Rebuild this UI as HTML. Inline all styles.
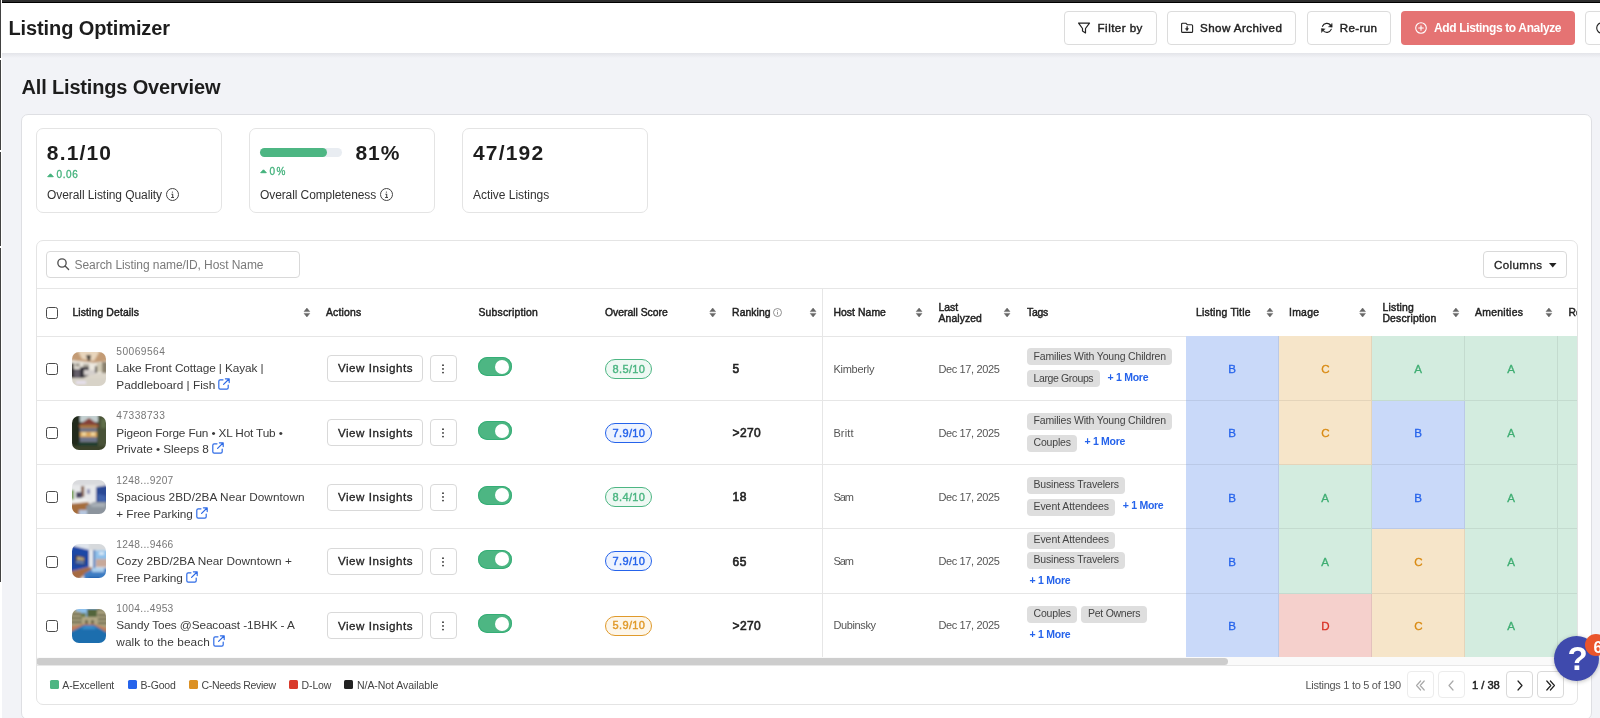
<!DOCTYPE html>
<html lang="en"><head><meta charset="utf-8"><title>Listing Optimizer</title>
<style>
*{box-sizing:border-box;margin:0;padding:0}
html,body{width:1600px;height:718px;overflow:hidden}
body{background:#f2f3f7;font-family:"Liberation Sans",sans-serif;color:#222;position:relative}
.abs{position:absolute}
.t{position:absolute;white-space:nowrap;line-height:1}
.b{font-weight:700}
.m{-webkit-text-stroke:0.3px currentColor}
.m2{-webkit-text-stroke:0.45px currentColor}
.m3{-webkit-text-stroke:0.42px currentColor}
.m4{-webkit-text-stroke:0.6px currentColor}
.btn{position:absolute;background:#fff;border:1px solid #dcdcdc;border-radius:4px}
.card{position:absolute;background:#fff;border:1px solid #e3e4e8;border-radius:7px}
.hl{position:absolute;height:1px;background:#e6e6e6}
.cb{position:absolute;width:12px;height:12px;border:1.5px solid #4a4a4a;border-radius:2.5px;background:#fff}
.sort{position:absolute}
.thumb{position:absolute;left:72px;width:34px;height:34px;border-radius:7px;overflow:hidden}
.tog{position:absolute;left:478px;width:34px;height:19px;border-radius:10px;background:#4db683;box-shadow:inset 0 0 0 1px #35ae76}
.tog i{position:absolute;right:3px;top:2.5px;width:14px;height:14px;border-radius:50%;background:#fff}
.badge{position:absolute;left:605px;width:47px;height:20px;border-radius:10px;border:1px solid}
.chip{position:absolute;height:17px;border-radius:4px;background:#dedede}
.g{position:absolute;border-right:1px solid rgba(0,0,0,.07);border-bottom:1px solid rgba(0,0,0,.07)}
.gB{background:#c9d9f9}.gC{background:#f6e5c9}.gA{background:#d3ecdf}.gD{background:#f5d0cc}
svg{position:absolute;overflow:visible}
</style></head><body><div id="wrap" style="position:absolute;left:0;top:0;width:1600px;height:718px;will-change:transform;overflow:hidden">

<div class="abs" style="left:0;top:0;width:1600px;height:53px;background:#fff"></div>
<div class="abs" style="left:0;top:53px;width:1600px;height:5px;background:linear-gradient(#e3e4e9,#f2f3f7)"></div>
<div class="abs" style="left:0;top:0;width:1600px;height:3px;background:linear-gradient(#2e2e2e 0,#2e2e2e 2px,#000 2px,#000 3px)"></div>
<div class="abs" style="left:0;top:0;width:2px;height:718px;background:#fff"></div>
<div class="abs" style="left:0;top:0;width:1px;height:582px;background:#424242"></div>
<div class="abs" style="left:0;top:57.5px;width:1px;height:2px;background:#fff"></div>
<div class="abs" style="left:0;top:150px;width:1px;height:2px;background:#fff"></div>
<div class="abs" style="left:0;top:246px;width:1px;height:2px;background:#fff"></div>
<span id="t1" class="t b" style="left:8.50px;top:18px;font-size:20px;color:#1d1d1d;letter-spacing:-0.115px;">Listing Optimizer</span>
<span id="t2" class="t b" style="left:21.50px;top:77px;font-size:20px;color:#1d1d1d;letter-spacing:-0.165px;">All Listings Overview</span>
<div class="btn" style="left:1064px;top:11px;width:93px;height:34px"></div>
<svg style="left:1078px;top:22px" width="12" height="12" viewBox="0 0 12 12" fill="none" stroke="#222" stroke-width="1.2" stroke-linejoin="round"><path d="M0.6 1.1h10.9L7.5 6.5v4.4L4.5 9.1V6.5z"/></svg>
<span id="t3" class="t m3" style="left:1097.60px;top:22px;font-size:11.6px;color:#222;letter-spacing:0.446px;">Filter by</span>
<div class="btn" style="left:1167px;top:11px;width:129px;height:34px"></div>
<svg style="left:1181px;top:22px" width="12" height="11" viewBox="0 0 12 11" fill="none" stroke="#222" stroke-width="1.1" stroke-linejoin="round" stroke-linecap="round"><path d="M1.6 1.2h3.2l1.4 1.5h4.4a1 1 0 0 1 1 1v5.700a1 1 0 0 1-1 1H1.600a1 1 0 0 1-1-1V2.200a1 1 0 0 1 1-1z"/><path d="M6.100 4.700v3.200" stroke-width="1.300"/><path d="M4.700 6.600h2.800L6.100 8.300z" fill="#222" stroke-width=".6"/></svg>
<span id="t4" class="t m3" style="left:1200.00px;top:22px;font-size:11.6px;color:#222;letter-spacing:0.433px;">Show Archived</span>
<div class="btn" style="left:1307px;top:11px;width:84px;height:34px"></div>
<svg style="left:1321px;top:22px" width="12" height="12" viewBox="0 0 12 12" fill="none" stroke="#222" stroke-width="1.15" stroke-linecap="round" stroke-linejoin="round"><path d="M1.500 4.300A4.700 4.700 0 0 1 9.700 3.300"/><path d="M10.200 7.400A4.700 4.700 0 0 1 2.100 8.500"/><path d="M11.100 1.700l.1 3.500-3.400-.4z" fill="#222" stroke-width=".5"/><path d="M.5 10.100L.4 6.600l3.400.4z" fill="#222" stroke-width=".5"/></svg>
<span id="t5" class="t m3" style="left:1339.80px;top:22px;font-size:11.6px;color:#222;letter-spacing:0.349px;">Re-run</span>
<div class="abs" style="left:1401px;top:11px;width:174px;height:34px;border-radius:4px;background:#e57373"></div>
<svg style="left:1415px;top:22px" width="12" height="12" viewBox="0 0 12 12" fill="none" stroke="#fff" stroke-width="1.1" stroke-linecap="round"><circle cx="6" cy="6" r="5.3"/><path d="M6 3.7v4.6M3.7 6h4.6"/></svg>
<span id="t6" class="t b" style="left:1434.00px;top:22px;font-size:12px;color:#fff;letter-spacing:-0.366px;">Add Listings to Analyze</span>
<div class="btn" style="left:1585px;top:11px;width:40px;height:34px"></div>
<svg style="left:1596px;top:22px" width="12" height="12" viewBox="0 0 12 12" fill="none" stroke="#222" stroke-width="1.1"><circle cx="6" cy="6" r="5.3"/></svg>
<div class="card" style="left:21px;top:114px;width:1571px;height:606px;border-color:#dedfe3"></div>
<div class="card" style="left:36px;top:128px;width:186px;height:85px;border-color:#e4e4e4"></div>
<div class="card" style="left:249px;top:128px;width:186px;height:85px;border-color:#e4e4e4"></div>
<div class="card" style="left:462px;top:128px;width:186px;height:85px;border-color:#e4e4e4"></div>
<span id="t7" class="t b" style="left:46.80px;top:142px;font-size:21px;color:#1d1d1d;letter-spacing:1.162px;">8.1/10</span>
<svg style="left:46.500px;top:172.500px" width="7" height="4.500" viewBox="0 0 7 4.500"><path d="M.7 3.700L3.500 .8 6.300 3.700z" fill="#43b27c" stroke="#43b27c" stroke-width="1" stroke-linejoin="round"/></svg>
<span id="t8" class="t m" style="left:56.50px;top:170px;font-size:10px;color:#43b27c;letter-spacing:0.577px;">0.06</span>
<span id="t9" class="t " style="left:47.00px;top:189px;font-size:12px;color:#333;letter-spacing:-0.074px;">Overall Listing Quality</span>
<svg style="left:166.3px;top:188px" width="13" height="13" viewBox="0 0 13 13" fill="none" stroke="#444" stroke-width="1"><circle cx="6.500" cy="6.500" r="6"/><path d="M5.4 6.200h1.300v3M5.100 9.400h2.900" stroke-width="1.050"/><circle cx="6.400" cy="4.100" r="0.650" fill="#444" stroke="none"/></svg>
<div class="abs" style="left:260px;top:148px;width:82px;height:9px;border-radius:5px;background:#e9edf2"></div>
<div class="abs" style="left:260px;top:148px;width:67px;height:9px;border-radius:5px;background:#4db683"></div>
<span id="t10" class="t b" style="left:355.50px;top:142px;font-size:21px;color:#1d1d1d;letter-spacing:0.884px;">81%</span>
<svg style="left:259.500px;top:169px" width="7" height="4.500" viewBox="0 0 7 4.500"><path d="M.7 3.700L3.500 .8 6.300 3.700z" fill="#43b27c" stroke="#43b27c" stroke-width="1" stroke-linejoin="round"/></svg>
<span id="t11" class="t m" style="left:269.50px;top:167px;font-size:10px;color:#43b27c;letter-spacing:1.547px;">0%</span>
<span id="t12" class="t " style="left:260.00px;top:189px;font-size:12px;color:#333;letter-spacing:-0.098px;">Overall Completeness</span>
<svg style="left:380.3px;top:188px" width="13" height="13" viewBox="0 0 13 13" fill="none" stroke="#444" stroke-width="1"><circle cx="6.500" cy="6.500" r="6"/><path d="M5.4 6.200h1.300v3M5.100 9.400h2.900" stroke-width="1.050"/><circle cx="6.400" cy="4.100" r="0.650" fill="#444" stroke="none"/></svg>
<span id="t13" class="t b" style="left:473.00px;top:142px;font-size:21px;color:#1d1d1d;letter-spacing:1.173px;">47/192</span>
<span id="t14" class="t " style="left:473.00px;top:189px;font-size:12px;color:#333;letter-spacing:-0.036px;">Active Listings</span>
<div class="card" style="left:36px;top:240px;width:1542px;height:465px;border-color:#e4e4e4;overflow:hidden" id="tcard">
<div class="abs" style="left:-37px;top:-241px;width:1600px;height:718px">
<div class="btn" style="left:46px;top:251px;width:254px;height:27px;border-color:#d9d9d9"></div>
<svg style="left:56.500px;top:258.400px" width="12" height="12" viewBox="0 0 12 12" fill="none" stroke="#505050" stroke-width="1.350" stroke-linecap="round"><circle cx="5" cy="5" r="4.150"/><path d="M8.100 8.100l3.500 3.400"/></svg>
<span id="t15" class="t " style="left:74.60px;top:259px;font-size:12px;color:#7a7a7a;letter-spacing:-0.079px;">Search Listing name/ID, Host Name</span>
<div class="btn" style="left:1482.5px;top:251px;width:84.5px;height:27px;border-color:#d9d9d9"></div>
<span id="t16" class="t m" style="left:1494.00px;top:259px;font-size:11.6px;color:#222;letter-spacing:0.375px;">Columns</span>
<svg style="left:1548.5px;top:263.3px" width="7.5" height="4.5" viewBox="0 0 7.5 4.5"><path d="M0 0h7.5L3.75 4.5z" fill="#222"/></svg>
<div class="hl" style="left:36px;top:288px;width:1542px"></div>
<div class="cb" style="left:46px;top:306.7px"></div>
<span id="t17" class="t m2" style="left:72.40px;top:308px;font-size:10.4px;color:#222;letter-spacing:0.129px;">Listing Details</span>
<svg class="sort" style="left:303px;top:307px" width="8" height="11" viewBox="0 0 8 11"><path d="M1.05 4.600L3.9 1 6.75 4.600z M1.05 6.400L3.9 10 6.75 6.400z" fill="#666" stroke="#666" stroke-width=".5" stroke-linejoin="round"/></svg>
<span id="t18" class="t m2" style="left:326.00px;top:308px;font-size:10.4px;color:#222;letter-spacing:0.170px;">Actions</span>
<span id="t19" class="t m2" style="left:478.40px;top:308px;font-size:10.4px;color:#222;letter-spacing:0.210px;">Subscription</span>
<span id="t20" class="t m2" style="left:605.00px;top:308px;font-size:10.4px;color:#222;letter-spacing:-0.013px;">Overall Score</span>
<svg class="sort" style="left:709px;top:307px" width="8" height="11" viewBox="0 0 8 11"><path d="M0.85 4.600L3.7 1 6.55 4.600z M0.85 6.400L3.7 10 6.55 6.400z" fill="#666" stroke="#666" stroke-width=".5" stroke-linejoin="round"/></svg>
<span id="t21" class="t m2" style="left:732.10px;top:308px;font-size:10.4px;color:#222;letter-spacing:0.046px;">Ranking</span>
<svg style="left:773.4px;top:307.8px" width="9" height="9" viewBox="0 0 9 9" fill="none" stroke="#777" stroke-width="0.8"><circle cx="4.5" cy="4.5" r="4"/><path d="M4.5 4v2.6"/><circle cx="4.5" cy="2.7" r="0.5" fill="#777" stroke="none"/></svg>
<svg class="sort" style="left:810px;top:307px" width="8" height="11" viewBox="0 0 8 11"><path d="M0.25 4.600L3.1 1 5.95 4.600z M0.25 6.400L3.1 10 5.95 6.400z" fill="#666" stroke="#666" stroke-width=".5" stroke-linejoin="round"/></svg>
<span id="t22" class="t m2" style="left:833.40px;top:308px;font-size:10.4px;color:#222;letter-spacing:0.066px;">Host Name</span>
<svg class="sort" style="left:916px;top:307px" width="8" height="11" viewBox="0 0 8 11"><path d="M0.25 4.600L3.1 1 5.95 4.600z M0.25 6.400L3.1 10 5.95 6.400z" fill="#666" stroke="#666" stroke-width=".5" stroke-linejoin="round"/></svg>
<span id="t23" class="t m2" style="left:938.60px;top:303px;font-size:10.4px;color:#222;letter-spacing:-0.047px;">Last</span>
<span id="t24" class="t m2" style="left:938.60px;top:314px;font-size:10.4px;color:#222;letter-spacing:0.079px;">Analyzed</span>
<svg class="sort" style="left:1004px;top:307px" width="8" height="11" viewBox="0 0 8 11"><path d="M0.25 4.600L3.1 1 5.95 4.600z M0.25 6.400L3.1 10 5.95 6.400z" fill="#666" stroke="#666" stroke-width=".5" stroke-linejoin="round"/></svg>
<span id="t25" class="t m2" style="left:1027.00px;top:308px;font-size:10.4px;color:#222;letter-spacing:-0.284px;">Tags</span>
<span id="t26" class="t m2" style="left:1196.00px;top:308px;font-size:10.4px;color:#222;letter-spacing:0.210px;">Listing Title</span>
<svg class="sort" style="left:1266px;top:307px" width="8" height="11" viewBox="0 0 8 11"><path d="M1.05 4.600L3.9 1 6.75 4.600z M1.05 6.400L3.9 10 6.75 6.400z" fill="#666" stroke="#666" stroke-width=".5" stroke-linejoin="round"/></svg>
<span id="t27" class="t m2" style="left:1289.00px;top:308px;font-size:10.4px;color:#222;letter-spacing:0.277px;">Image</span>
<svg class="sort" style="left:1359px;top:307px" width="8" height="11" viewBox="0 0 8 11"><path d="M0.75 4.600L3.6 1 6.45 4.600z M0.75 6.400L3.6 10 6.45 6.400z" fill="#666" stroke="#666" stroke-width=".5" stroke-linejoin="round"/></svg>
<span id="t28" class="t m2" style="left:1382.40px;top:303px;font-size:10.4px;color:#222;letter-spacing:0.242px;">Listing</span>
<span id="t29" class="t m2" style="left:1382.40px;top:314px;font-size:10.4px;color:#222;letter-spacing:0.182px;">Description</span>
<svg class="sort" style="left:1452px;top:307px" width="8" height="11" viewBox="0 0 8 11"><path d="M1.05 4.600L3.9 1 6.75 4.600z M1.05 6.400L3.9 10 6.75 6.400z" fill="#666" stroke="#666" stroke-width=".5" stroke-linejoin="round"/></svg>
<span id="t30" class="t m2" style="left:1475.00px;top:308px;font-size:10.4px;color:#222;letter-spacing:0.297px;">Amenities</span>
<svg class="sort" style="left:1545px;top:307px" width="8" height="11" viewBox="0 0 8 11"><path d="M1.05 4.600L3.9 1 6.75 4.600z M1.05 6.400L3.9 10 6.75 6.400z" fill="#666" stroke="#666" stroke-width=".5" stroke-linejoin="round"/></svg>
<span id="t31" class="t m2" style="left:1568.40px;top:308px;font-size:10.4px;color:#222;">Re</span>
<div class="hl" style="left:36px;top:336px;width:1150px"></div>
<div class="cb" style="left:46px;top:362.7px"></div>
<div class="thumb" style="top:351.5px"><svg width="34" height="34" viewBox="0 0 34 34"><defs><filter id="bl1" x="-10%" y="-10%" width="120%" height="120%"><feGaussianBlur stdDeviation="1"/></filter></defs><g filter="url(#bl1)"><rect x="-3" y="-3" width="40" height="40" fill="#dcd6ca"/><path d="M-3 -3h40v12L22 11 -3 8z" fill="#c39b74"/><path d="M5 -3h24l-7 12-12-2z" fill="#e8d5bc"/><path d="M-3 8l25 3 15-2v11l-15 2H-3z" fill="#ece8df"/><path d="M3 11h5v4H3zM11 12h6v4h-6z" fill="#a9a49a"/><rect x="-3" y="11" width="5" height="17" fill="#2f2a27"/><path d="M2 17h8v10H2z" fill="#66616a"/><path d="M8 15h9v8l-6 3H8z" fill="#35333a"/><path d="M12 18h11v5H12z" fill="#d4cfcc"/><path d="M23 14h2v7h-2z" fill="#45413f"/><path d="M25 11h5v9h-5z" fill="#cfc8b2"/><path d="M30 10h7v11h-7z" fill="#8a816e"/><path d="M14 3h5l-1 6h-2z" fill="#3d3832"/><path d="M-3 26h40v11H-3z" fill="#d8d3c8"/><path d="M4 29h10v3H4z" fill="#e6e0ee"/></g></svg></div>
<span id="t32" class="t " style="left:116.30px;top:347px;font-size:10.2px;color:#777;letter-spacing:0.453px;">50069564</span>
<span id="t33" class="t " style="left:116.30px;top:363px;font-size:11.8px;color:#3a3a3a;letter-spacing:-0.094px;">Lake Front Cottage | Kayak |</span>
<span id="t34" class="t " style="left:116.30px;top:380px;font-size:11.8px;color:#3a3a3a;letter-spacing:0.011px;">Paddleboard | Fish</span>
<svg style="left:218px;top:378.2px" width="12" height="12" viewBox="0 0 12 12" fill="none" stroke="#2e6be6" stroke-width="1.2" stroke-linecap="round" stroke-linejoin="round"><path d="M5 1.8H2.2A1.4 1.4 0 0 0 .8 3.2v6.6a1.4 1.4 0 0 0 1.4 1.4h6.6a1.4 1.4 0 0 0 1.4-1.4V7"/><path d="M7.4.8h3.8v3.8M11 1L5.6 6.4"/></svg>
<div class="btn" style="left:326.5px;top:355.2px;width:96px;height:27px;border-color:#d9d9d9"></div>
<span id="t35" class="t m" style="left:337.90px;top:362px;font-size:11.6px;color:#222;letter-spacing:0.549px;">View Insights</span>
<div class="btn" style="left:430.2px;top:355.2px;width:26.5px;height:27px;border-color:#d9d9d9"></div>
<svg style="left:442px;top:363.7px" width="2" height="10" viewBox="0 0 2 10"><circle cx="1" cy="1.2" r=".85" fill="#222"/><circle cx="1" cy="4.900" r=".85" fill="#222"/><circle cx="1" cy="8.600" r=".85" fill="#222"/></svg>
<div class="tog" style="top:357.0px"><i></i></div>
<div class="badge" style="top:358.5px;border-color:#4db683;background:#eef8f3"></div>
<span id="t36" class="t m3" style="left:612.50px;top:364px;font-size:11px;color:#4db683;letter-spacing:0.381px;">8.5/10</span>
<span id="t37" class="t m4" style="left:732.50px;top:363px;font-size:12px;color:#222;letter-spacing:0.312px;">5</span>
<span id="t38" class="t " style="left:833.40px;top:364px;font-size:11px;color:#555;letter-spacing:-0.242px;">Kimberly</span>
<span id="t39" class="t " style="left:938.40px;top:364px;font-size:11px;color:#555;letter-spacing:-0.358px;">Dec 17, 2025</span>
<div class="chip" style="left:1026.5px;top:348.4px;width:145.2px"></div>
<span id="t40" class="t " style="left:1033.50px;top:351px;font-size:10.5px;color:#444;letter-spacing:-0.172px;">Families With Young Children</span>
<div class="chip" style="left:1026.5px;top:370.4px;width:73.6px"></div>
<span id="t41" class="t " style="left:1033.50px;top:373px;font-size:10.5px;color:#444;letter-spacing:-0.374px;">Large Groups</span>
<span id="t42" class="t b" style="left:1107.50px;top:372px;font-size:10.5px;color:#2563eb;letter-spacing:-0.272px;">+ 1 More</span>
<div class="g gB" style="left:1186.0px;top:336px;width:93px;height:65px"></div>
<span id="t43" class="t m" style="left:1228.30px;top:363px;font-size:11.6px;color:#2563eb;">B</span>
<div class="g gC" style="left:1279.0px;top:336px;width:93px;height:65px"></div>
<span id="t44" class="t m" style="left:1321.30px;top:363px;font-size:11.6px;color:#d98a12;">C</span>
<div class="g gA" style="left:1372.0px;top:336px;width:93px;height:65px"></div>
<span id="t45" class="t m" style="left:1414.30px;top:363px;font-size:11.6px;color:#3fae73;">A</span>
<div class="g gA" style="left:1465.0px;top:336px;width:93px;height:65px"></div>
<span id="t46" class="t m" style="left:1507.30px;top:363px;font-size:11.6px;color:#3fae73;">A</span>
<div class="g gA" style="left:1558px;top:336px;width:30px;height:65px"></div>
<div class="hl" style="left:36px;top:400px;width:1150px"></div>
<div class="cb" style="left:46px;top:426.9px"></div>
<div class="thumb" style="top:415.8px"><svg width="34" height="34" viewBox="0 0 34 34"><defs><filter id="bl2" x="-10%" y="-10%" width="120%" height="120%"><feGaussianBlur stdDeviation="1"/></filter></defs><g filter="url(#bl2)"><rect x="-3" y="-3" width="40" height="40" fill="#3a442e"/><path d="M8 -3h18v9H8z" fill="#c3cfd0"/><path d="M-3 -3h11v40H-3z" fill="#232c1b"/><path d="M26 -3h11v40H26z" fill="#485337"/><path d="M29 3h5v9h-5z" fill="#5f6d4a"/><path d="M7 9l10-7 10 7v2H7z" fill="#843f37"/><rect x="8" y="9" width="17" height="19" fill="#8d8a82"/><rect x="8" y="9" width="17" height="3" fill="#a7763f"/><rect x="8" y="12.5" width="17" height="3" fill="#6c7084"/><rect x="8" y="16" width="17" height="5" fill="#d9a65c"/><rect x="10" y="16.5" width="4" height="3" fill="#f3dca6"/><rect x="19" y="16.5" width="4" height="3" fill="#f3dca6"/><rect x="8" y="21.5" width="17" height="4" fill="#69718a"/><rect x="6" y="26" width="20" height="3.5" fill="#1d3a2f"/><path d="M-3 30h40v7H-3z" fill="#3a432c"/></g></svg></div>
<span id="t47" class="t " style="left:116.30px;top:411px;font-size:10.2px;color:#777;letter-spacing:0.453px;">47338733</span>
<span id="t48" class="t " style="left:116.30px;top:428px;font-size:11.8px;color:#3a3a3a;letter-spacing:-0.154px;">Pigeon Forge Fun • XL Hot Tub •</span>
<span id="t49" class="t " style="left:116.30px;top:444px;font-size:11.8px;color:#3a3a3a;letter-spacing:-0.048px;">Private • Sleeps 8</span>
<svg style="left:211.5px;top:442.45px" width="12" height="12" viewBox="0 0 12 12" fill="none" stroke="#2e6be6" stroke-width="1.2" stroke-linecap="round" stroke-linejoin="round"><path d="M5 1.8H2.2A1.4 1.4 0 0 0 .8 3.2v6.6a1.4 1.4 0 0 0 1.4 1.4h6.6a1.4 1.4 0 0 0 1.4-1.4V7"/><path d="M7.4.8h3.8v3.8M11 1L5.6 6.4"/></svg>
<div class="btn" style="left:326.5px;top:419.4px;width:96px;height:27px;border-color:#d9d9d9"></div>
<span id="t50" class="t m" style="left:337.90px;top:427px;font-size:11.6px;color:#222;letter-spacing:0.549px;">View Insights</span>
<div class="btn" style="left:430.2px;top:419.4px;width:26.5px;height:27px;border-color:#d9d9d9"></div>
<svg style="left:442px;top:427.9px" width="2" height="10" viewBox="0 0 2 10"><circle cx="1" cy="1.2" r=".85" fill="#222"/><circle cx="1" cy="4.900" r=".85" fill="#222"/><circle cx="1" cy="8.600" r=".85" fill="#222"/></svg>
<div class="tog" style="top:421.2px"><i></i></div>
<div class="badge" style="top:422.8px;border-color:#2563eb;background:#eef3fe"></div>
<span id="t51" class="t m3" style="left:612.50px;top:428px;font-size:11px;color:#2563eb;letter-spacing:0.381px;">7.9/10</span>
<span id="t52" class="t m4" style="left:732.50px;top:427px;font-size:12px;color:#222;letter-spacing:0.390px;">&gt;270</span>
<span id="t53" class="t " style="left:833.40px;top:428px;font-size:11px;color:#555;letter-spacing:0.134px;">Britt</span>
<span id="t54" class="t " style="left:938.40px;top:428px;font-size:11px;color:#555;letter-spacing:-0.358px;">Dec 17, 2025</span>
<div class="chip" style="left:1026.5px;top:412.6px;width:145.2px"></div>
<span id="t55" class="t " style="left:1033.50px;top:415px;font-size:10.5px;color:#444;letter-spacing:-0.172px;">Families With Young Children</span>
<div class="chip" style="left:1026.5px;top:434.6px;width:50.5px"></div>
<span id="t56" class="t " style="left:1033.50px;top:437px;font-size:10.5px;color:#444;letter-spacing:-0.172px;">Couples</span>
<span id="t57" class="t b" style="left:1084.40px;top:436px;font-size:10.5px;color:#2563eb;letter-spacing:-0.272px;">+ 1 More</span>
<div class="g gB" style="left:1186.0px;top:401px;width:93px;height:64px"></div>
<span id="t58" class="t m" style="left:1228.30px;top:427px;font-size:11.6px;color:#2563eb;">B</span>
<div class="g gC" style="left:1279.0px;top:401px;width:93px;height:64px"></div>
<span id="t59" class="t m" style="left:1321.30px;top:427px;font-size:11.6px;color:#d98a12;">C</span>
<div class="g gB" style="left:1372.0px;top:401px;width:93px;height:64px"></div>
<span id="t60" class="t m" style="left:1414.30px;top:427px;font-size:11.6px;color:#2563eb;">B</span>
<div class="g gA" style="left:1465.0px;top:401px;width:93px;height:64px"></div>
<span id="t61" class="t m" style="left:1507.30px;top:427px;font-size:11.6px;color:#3fae73;">A</span>
<div class="g gA" style="left:1558px;top:401px;width:30px;height:64px"></div>
<div class="hl" style="left:36px;top:464px;width:1150px"></div>
<div class="cb" style="left:46px;top:491.2px"></div>
<div class="thumb" style="top:480.0px"><svg width="34" height="34" viewBox="0 0 34 34"><defs><filter id="bl3" x="-10%" y="-10%" width="120%" height="120%"><feGaussianBlur stdDeviation="1"/></filter></defs><g filter="url(#bl3)"><rect x="-3" y="-3" width="40" height="40" fill="#e7e8ea"/><path d="M-3 -3h40v8H-3z" fill="#d9dadd"/><path d="M24 7l13-2v19l-13-2z" fill="#2a4995"/><path d="M26 14l8 2v6l-8-1z" fill="#3f63ad"/><rect x="9" y="6" width="3.2" height="11" fill="#8a6650"/><rect x="4" y="12" width="6" height="6" fill="#484460"/><rect x="15" y="9" width="3" height="5" fill="#8f93b8"/><rect x="-3" y="10" width="5" height="11" fill="#6f9b48"/><path d="M-3 19.5h17l4 3.5H-3z" fill="#f3f3f1"/><path d="M-3 24l19-2 2 3-8 12H-3z" fill="#a56d3a"/><path d="M14 26l8-4h15v15H15z" fill="#8c949d"/><path d="M18 25l6-2h9v4h-13z" fill="#a8afb6"/><path d="M7 30h8v7H7z" fill="#b5c6de"/></g></svg></div>
<span id="t62" class="t " style="left:116.30px;top:476px;font-size:10.2px;color:#777;letter-spacing:0.317px;">1248...9207</span>
<span id="t63" class="t " style="left:116.30px;top:492px;font-size:11.8px;color:#3a3a3a;letter-spacing:0.049px;">Spacious 2BD/2BA Near Downtown</span>
<span id="t64" class="t " style="left:116.30px;top:509px;font-size:11.8px;color:#3a3a3a;letter-spacing:-0.093px;">+ Free Parking</span>
<svg style="left:195.5px;top:506.7px" width="12" height="12" viewBox="0 0 12 12" fill="none" stroke="#2e6be6" stroke-width="1.2" stroke-linecap="round" stroke-linejoin="round"><path d="M5 1.8H2.2A1.4 1.4 0 0 0 .8 3.2v6.6a1.4 1.4 0 0 0 1.4 1.4h6.6a1.4 1.4 0 0 0 1.4-1.4V7"/><path d="M7.4.8h3.8v3.8M11 1L5.6 6.4"/></svg>
<div class="btn" style="left:326.5px;top:483.7px;width:96px;height:27px;border-color:#d9d9d9"></div>
<span id="t65" class="t m" style="left:337.90px;top:491px;font-size:11.6px;color:#222;letter-spacing:0.549px;">View Insights</span>
<div class="btn" style="left:430.2px;top:483.7px;width:26.5px;height:27px;border-color:#d9d9d9"></div>
<svg style="left:442px;top:492.2px" width="2" height="10" viewBox="0 0 2 10"><circle cx="1" cy="1.2" r=".85" fill="#222"/><circle cx="1" cy="4.900" r=".85" fill="#222"/><circle cx="1" cy="8.600" r=".85" fill="#222"/></svg>
<div class="tog" style="top:485.5px"><i></i></div>
<div class="badge" style="top:487.0px;border-color:#4db683;background:#eef8f3"></div>
<span id="t66" class="t m3" style="left:612.50px;top:492px;font-size:11px;color:#4db683;letter-spacing:0.381px;">8.4/10</span>
<span id="t67" class="t m4" style="left:732.50px;top:491px;font-size:12px;color:#222;letter-spacing:0.541px;">18</span>
<span id="t68" class="t " style="left:833.40px;top:492px;font-size:11px;color:#555;letter-spacing:-1.012px;">Sam</span>
<span id="t69" class="t " style="left:938.40px;top:492px;font-size:11px;color:#555;letter-spacing:-0.358px;">Dec 17, 2025</span>
<div class="chip" style="left:1026.5px;top:476.9px;width:98.8px"></div>
<span id="t70" class="t " style="left:1033.50px;top:479px;font-size:10.5px;color:#444;letter-spacing:-0.188px;">Business Travelers</span>
<div class="chip" style="left:1026.5px;top:498.9px;width:88.8px"></div>
<span id="t71" class="t " style="left:1033.50px;top:501px;font-size:10.5px;color:#444;letter-spacing:-0.070px;">Event Attendees</span>
<span id="t72" class="t b" style="left:1122.70px;top:500px;font-size:10.5px;color:#2563eb;letter-spacing:-0.272px;">+ 1 More</span>
<div class="g gB" style="left:1186.0px;top:465px;width:93px;height:64px"></div>
<span id="t73" class="t m" style="left:1228.30px;top:492px;font-size:11.6px;color:#2563eb;">B</span>
<div class="g gA" style="left:1279.0px;top:465px;width:93px;height:64px"></div>
<span id="t74" class="t m" style="left:1321.30px;top:492px;font-size:11.6px;color:#3fae73;">A</span>
<div class="g gB" style="left:1372.0px;top:465px;width:93px;height:64px"></div>
<span id="t75" class="t m" style="left:1414.30px;top:492px;font-size:11.6px;color:#2563eb;">B</span>
<div class="g gA" style="left:1465.0px;top:465px;width:93px;height:64px"></div>
<span id="t76" class="t m" style="left:1507.30px;top:492px;font-size:11.6px;color:#3fae73;">A</span>
<div class="g gA" style="left:1558px;top:465px;width:30px;height:64px"></div>
<div class="hl" style="left:36px;top:528px;width:1150px"></div>
<div class="cb" style="left:46px;top:555.5px"></div>
<div class="thumb" style="top:544.2px"><svg width="34" height="34" viewBox="0 0 34 34"><defs><filter id="bl4" x="-10%" y="-10%" width="120%" height="120%"><feGaussianBlur stdDeviation="1"/></filter></defs><g filter="url(#bl4)"><rect x="-3" y="-3" width="40" height="40" fill="#e0e5ec"/><path d="M-3 1l20 5v17L-3 28z" fill="#1c46a6"/><path d="M3 11l10 2v8L3 20z" fill="#35364a"/><path d="M5 12.5l7 1.3v3L5 16z" fill="#b9a57e"/><path d="M4 17l8 .8v2L4 19z" fill="#6d8fc9"/><path d="M17 -3h20v9H17z" fill="#d6d9dc"/><path d="M17 6h4v17h-4z" fill="#e9ecef"/><path d="M21 6h2.4v18H21z" fill="#4f7dbb"/><path d="M23.4 6.5H37v10H23.400z" fill="#8dc0ea"/><path d="M27 8h5v3h-5z" fill="#d8e8f6"/><path d="M24 15h13v8H24z" fill="#c7a99b"/><path d="M-3 28l20-5 4 1L5 37H-3z" fill="#a66b42"/><path d="M12 30l10-6h15v13H12z" fill="#3c7dc3"/><path d="M20 24h12v4H20z" fill="#a9cfee"/><path d="M16 33h12v4H16z" fill="#1f5dac"/></g></svg></div>
<span id="t77" class="t " style="left:116.30px;top:540px;font-size:10.2px;color:#777;letter-spacing:0.317px;">1248...9466</span>
<span id="t78" class="t " style="left:116.30px;top:556px;font-size:11.8px;color:#3a3a3a;letter-spacing:0.003px;">Cozy 2BD/2BA Near Downtown +</span>
<span id="t79" class="t " style="left:116.30px;top:573px;font-size:11.8px;color:#3a3a3a;letter-spacing:-0.095px;">Free Parking</span>
<svg style="left:185.5px;top:570.95px" width="12" height="12" viewBox="0 0 12 12" fill="none" stroke="#2e6be6" stroke-width="1.2" stroke-linecap="round" stroke-linejoin="round"><path d="M5 1.8H2.2A1.4 1.4 0 0 0 .8 3.2v6.6a1.4 1.4 0 0 0 1.4 1.4h6.6a1.4 1.4 0 0 0 1.4-1.4V7"/><path d="M7.4.8h3.8v3.8M11 1L5.6 6.4"/></svg>
<div class="btn" style="left:326.5px;top:548.0px;width:96px;height:27px;border-color:#d9d9d9"></div>
<span id="t80" class="t m" style="left:337.90px;top:555px;font-size:11.6px;color:#222;letter-spacing:0.549px;">View Insights</span>
<div class="btn" style="left:430.2px;top:548.0px;width:26.5px;height:27px;border-color:#d9d9d9"></div>
<svg style="left:442px;top:556.5px" width="2" height="10" viewBox="0 0 2 10"><circle cx="1" cy="1.2" r=".85" fill="#222"/><circle cx="1" cy="4.900" r=".85" fill="#222"/><circle cx="1" cy="8.600" r=".85" fill="#222"/></svg>
<div class="tog" style="top:549.8px"><i></i></div>
<div class="badge" style="top:551.2px;border-color:#2563eb;background:#eef3fe"></div>
<span id="t81" class="t m3" style="left:612.50px;top:556px;font-size:11px;color:#2563eb;letter-spacing:0.381px;">7.9/10</span>
<span id="t82" class="t m4" style="left:732.50px;top:556px;font-size:12px;color:#222;letter-spacing:0.541px;">65</span>
<span id="t83" class="t " style="left:833.40px;top:556px;font-size:11px;color:#555;letter-spacing:-1.012px;">Sam</span>
<span id="t84" class="t " style="left:938.40px;top:556px;font-size:11px;color:#555;letter-spacing:-0.358px;">Dec 17, 2025</span>
<div class="chip" style="left:1026.5px;top:531.5px;width:88.8px"></div>
<span id="t85" class="t " style="left:1033.50px;top:534px;font-size:10.5px;color:#444;letter-spacing:-0.070px;">Event Attendees</span>
<div class="chip" style="left:1026.5px;top:551.8px;width:98.8px"></div>
<span id="t86" class="t " style="left:1033.50px;top:554px;font-size:10.5px;color:#444;letter-spacing:-0.188px;">Business Travelers</span>
<span id="t87" class="t b" style="left:1029.60px;top:575px;font-size:10.5px;color:#2563eb;letter-spacing:-0.272px;">+ 1 More</span>
<div class="g gB" style="left:1186.0px;top:529px;width:93px;height:65px"></div>
<span id="t88" class="t m" style="left:1228.30px;top:556px;font-size:11.6px;color:#2563eb;">B</span>
<div class="g gA" style="left:1279.0px;top:529px;width:93px;height:65px"></div>
<span id="t89" class="t m" style="left:1321.30px;top:556px;font-size:11.6px;color:#3fae73;">A</span>
<div class="g gC" style="left:1372.0px;top:529px;width:93px;height:65px"></div>
<span id="t90" class="t m" style="left:1414.30px;top:556px;font-size:11.6px;color:#d98a12;">C</span>
<div class="g gA" style="left:1465.0px;top:529px;width:93px;height:65px"></div>
<span id="t91" class="t m" style="left:1507.30px;top:556px;font-size:11.6px;color:#3fae73;">A</span>
<div class="g gA" style="left:1558px;top:529px;width:30px;height:65px"></div>
<div class="hl" style="left:36px;top:593px;width:1150px"></div>
<div class="cb" style="left:46px;top:619.7px"></div>
<div class="thumb" style="top:608.5px"><svg width="34" height="34" viewBox="0 0 34 34"><defs><filter id="bl5" x="-10%" y="-10%" width="120%" height="120%"><feGaussianBlur stdDeviation="1"/></filter></defs><g filter="url(#bl5)"><rect x="-3" y="-3" width="40" height="40" fill="#8b8868"/><path d="M4 -3h21v11H4z" fill="#8dc0ec"/><path d="M-3 1l12 2v14H-3z" fill="#a8a07d"/><path d="M-3 4.500h12v1.6H-3zM-3 8.500h12v1.6H-3zM-3 12.500h12v1.6H-3z" fill="#59553c"/><path d="M15 0h10v10H15z" fill="#52653a"/><path d="M9 4h5v6H9z" fill="#6d7a4a"/><path d="M25 2h12v17H25z" fill="#a8a07e"/><path d="M26 5.500h11v1.600H26zM26 9.500h11v1.600H26zM26 13.500h11v1.600H26z" fill="#5a563d"/><path d="M10 8h15v8H10z" fill="#b3a985"/><path d="M13 11h3v4h-3zM19 11h3v4h-3z" fill="#6b6548"/><path d="M-3 18l15-3h10l15 5v4L22 16H12L-3 23z" fill="#c67c58"/><path d="M-3 24l15-8h10l15 9v12H-3z" fill="#1b6eae"/><path d="M9 20l4-3h8l4 3z" fill="#3a8fcb"/></g></svg></div>
<span id="t92" class="t " style="left:116.30px;top:604px;font-size:10.2px;color:#777;letter-spacing:0.317px;">1004...4953</span>
<span id="t93" class="t " style="left:116.30px;top:620px;font-size:11.8px;color:#3a3a3a;letter-spacing:-0.107px;">Sandy Toes @Seacoast -1BHK - A</span>
<span id="t94" class="t " style="left:116.30px;top:637px;font-size:11.8px;color:#3a3a3a;letter-spacing:0.105px;">walk to the beach</span>
<svg style="left:212.5px;top:635.2px" width="12" height="12" viewBox="0 0 12 12" fill="none" stroke="#2e6be6" stroke-width="1.2" stroke-linecap="round" stroke-linejoin="round"><path d="M5 1.8H2.2A1.4 1.4 0 0 0 .8 3.2v6.6a1.4 1.4 0 0 0 1.4 1.4h6.6a1.4 1.4 0 0 0 1.4-1.4V7"/><path d="M7.4.8h3.8v3.8M11 1L5.6 6.4"/></svg>
<div class="btn" style="left:326.5px;top:612.2px;width:96px;height:27px;border-color:#d9d9d9"></div>
<span id="t95" class="t m" style="left:337.90px;top:620px;font-size:11.6px;color:#222;letter-spacing:0.549px;">View Insights</span>
<div class="btn" style="left:430.2px;top:612.2px;width:26.5px;height:27px;border-color:#d9d9d9"></div>
<svg style="left:442px;top:620.7px" width="2" height="10" viewBox="0 0 2 10"><circle cx="1" cy="1.2" r=".85" fill="#222"/><circle cx="1" cy="4.900" r=".85" fill="#222"/><circle cx="1" cy="8.600" r=".85" fill="#222"/></svg>
<div class="tog" style="top:614.0px"><i></i></div>
<div class="badge" style="top:615.5px;border-color:#e09a2b;background:#fdf6ea"></div>
<span id="t96" class="t m3" style="left:612.50px;top:620px;font-size:11px;color:#e09a2b;letter-spacing:0.381px;">5.9/10</span>
<span id="t97" class="t m4" style="left:732.50px;top:620px;font-size:12px;color:#222;letter-spacing:0.390px;">&gt;270</span>
<span id="t98" class="t " style="left:833.40px;top:620px;font-size:11px;color:#555;letter-spacing:-0.364px;">Dubinsky</span>
<span id="t99" class="t " style="left:938.40px;top:620px;font-size:11px;color:#555;letter-spacing:-0.358px;">Dec 17, 2025</span>
<div class="chip" style="left:1026.5px;top:605.7px;width:50.5px"></div>
<span id="t100" class="t " style="left:1033.50px;top:608px;font-size:10.5px;color:#444;letter-spacing:-0.172px;">Couples</span>
<div class="chip" style="left:1081.0px;top:605.7px;width:65.5px"></div>
<span id="t101" class="t " style="left:1088.00px;top:608px;font-size:10.5px;color:#444;letter-spacing:-0.262px;">Pet Owners</span>
<span id="t102" class="t b" style="left:1029.60px;top:629px;font-size:10.5px;color:#2563eb;letter-spacing:-0.272px;">+ 1 More</span>
<div class="g gB" style="left:1186.0px;top:594px;width:93px;height:64px"></div>
<span id="t103" class="t m" style="left:1228.30px;top:620px;font-size:11.6px;color:#2563eb;">B</span>
<div class="g gD" style="left:1279.0px;top:594px;width:93px;height:64px"></div>
<span id="t104" class="t m" style="left:1321.30px;top:620px;font-size:11.6px;color:#d93025;">D</span>
<div class="g gC" style="left:1372.0px;top:594px;width:93px;height:64px"></div>
<span id="t105" class="t m" style="left:1414.30px;top:620px;font-size:11.6px;color:#d98a12;">C</span>
<div class="g gA" style="left:1465.0px;top:594px;width:93px;height:64px"></div>
<span id="t106" class="t m" style="left:1507.30px;top:620px;font-size:11.6px;color:#3fae73;">A</span>
<div class="g gA" style="left:1558px;top:594px;width:30px;height:64px"></div>
<div class="abs" style="left:822px;top:289px;width:1px;height:368px;background:#e6e6e6"></div>
<div class="abs" style="left:36px;top:657px;width:1542px;height:8px;background:#fafafa"></div>
<div class="abs" style="left:36px;top:665px;width:1542px;height:1px;background:#e8e8e8"></div>
<div class="abs" style="left:36px;top:657.5px;width:1192px;height:7.5px;border-radius:4px;background:#cdcdcd"></div>
<div class="abs" style="left:49.7px;top:680.4px;width:9px;height:9px;border-radius:1.5px;background:#4db683"></div>
<span id="t107" class="t " style="left:62.30px;top:680px;font-size:10.5px;color:#444;letter-spacing:-0.111px;">A-Excellent</span>
<div class="abs" style="left:127.6px;top:680.4px;width:9px;height:9px;border-radius:1.5px;background:#2563eb"></div>
<span id="t108" class="t " style="left:140.50px;top:680px;font-size:10.5px;color:#444;letter-spacing:-0.158px;">B-Good</span>
<div class="abs" style="left:188.9px;top:680.4px;width:9px;height:9px;border-radius:1.5px;background:#dc9124"></div>
<span id="t109" class="t " style="left:201.50px;top:680px;font-size:10.5px;color:#444;letter-spacing:-0.329px;">C-Needs Review</span>
<div class="abs" style="left:289.3px;top:680.4px;width:9px;height:9px;border-radius:1.5px;background:#d93a2b"></div>
<span id="t110" class="t " style="left:301.60px;top:680px;font-size:10.5px;color:#444;letter-spacing:-0.136px;">D-Low</span>
<div class="abs" style="left:344.4px;top:680.4px;width:9px;height:9px;border-radius:1.5px;background:#222"></div>
<span id="t111" class="t " style="left:357.00px;top:680px;font-size:10.5px;color:#444;letter-spacing:-0.051px;">N/A-Not Available</span>
<span id="t112" class="t " style="left:1305.50px;top:680px;font-size:11px;color:#555;letter-spacing:-0.286px;">Listings 1 to 5 of 190</span>
<div class="btn" style="left:1407.2px;top:671.4px;width:27px;height:27px;border-color:#ececec"></div>
<svg style="left:1416.2px;top:679.5px" width="9" height="11" viewBox="0 0 9 11" fill="none" stroke="#a9a9a9" stroke-width="1.2" stroke-linecap="round" stroke-linejoin="round"><path d="M8.2 1L4.2 5.5l4 4.5M4.6 1L.6 5.5l4 4.5"/></svg>
<div class="btn" style="left:1437.6px;top:671.4px;width:27px;height:27px;border-color:#ececec"></div>
<svg style="left:1448.1px;top:679.5px" width="6" height="11" viewBox="0 0 6 11" fill="none" stroke="#a9a9a9" stroke-width="1.2" stroke-linecap="round" stroke-linejoin="round"><path d="M5 1L1 5.5 5 10"/></svg>
<div class="btn" style="left:1506.0px;top:671.4px;width:27px;height:27px;border-color:#d9d9d9"></div>
<svg style="left:1516.5px;top:679.5px" width="6" height="11" viewBox="0 0 6 11" fill="none" stroke="#222" stroke-width="1.2" stroke-linecap="round" stroke-linejoin="round"><path d="M1 1l4 4.5L1 10"/></svg>
<div class="btn" style="left:1536.5px;top:671.4px;width:27px;height:27px;border-color:#d9d9d9"></div>
<svg style="left:1545.5px;top:679.5px" width="9" height="11" viewBox="0 0 9 11" fill="none" stroke="#222" stroke-width="1.2" stroke-linecap="round" stroke-linejoin="round"><path d="M.8 1l4 4.5-4 4.5M4.4 1l4 4.5-4 4.5"/></svg>
<span id="t113" class="t m2" style="left:1472.00px;top:680px;font-size:11.2px;color:#222;letter-spacing:-0.040px;">1 / 38</span>
</div></div>
<div class="abs" style="left:1554px;top:635.5px;width:45px;height:45px;border-radius:50%;background:#3f4aad;box-shadow:0 1px 4px rgba(0,0,0,.25)"></div>
<span id="t114" class="t b" style="left:1567.60px;top:642px;font-size:33px;color:#fff;">?</span>
<div class="abs" style="left:1585px;top:634px;width:22px;height:22px;border-radius:50%;background:#ea552b"></div>
<span id="t115" class="t b" style="left:1593.50px;top:640px;font-size:16px;color:#fff;">6</span>
</div></body></html>
